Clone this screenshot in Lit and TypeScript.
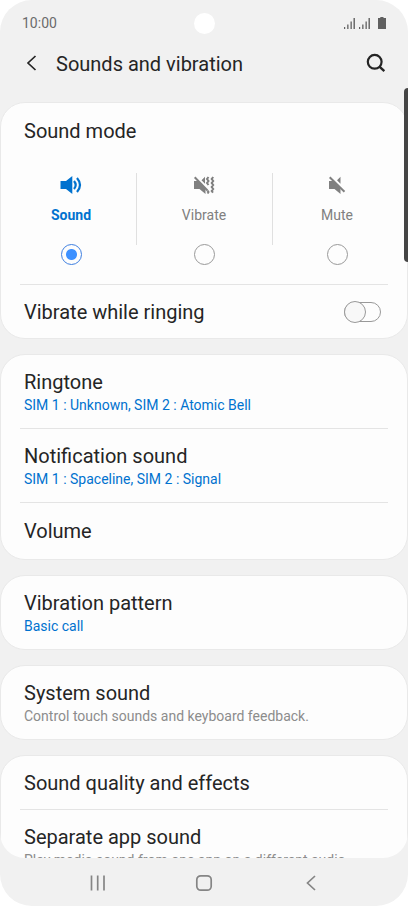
import { LitElement, html, css, nothing } from "lit";
import { customElement, property, state } from "lit/decorators.js";
import { classMap } from "lit/directives/class-map.js";

type Mode = "sound" | "vibrate" | "mute";

const modeIcons = {
  sound: html`<svg width="22" height="18" viewBox="0 0 22 18" fill="currentColor" aria-hidden="true">
    <path d="M0.500 5h5.500L12.300 0v18L6 13H0.500z" />
    <path d="M14 5q3.400 4 0 8M17 2q6 7 0 14" fill="none" stroke="currentColor" stroke-width="2.200" />
  </svg>`,
  vibrate: html`<svg width="22" height="18" viewBox="0 0 22 18" fill="currentColor" aria-hidden="true">
    <path d="M1 5h4l7.500 7.500V18L6.500 13H1zM12 0.800v7L8.500 4.300z" />
    <path d="M1.700 1.200 14.500 14.500" fill="none" stroke="currentColor" stroke-width="2" />
    <path d="M15.500 1l-1.500 2 1.500 2-1.500 2 1.500 2M20.200 1l-1.500 2 1.500 2-1.500 2 1.500 2-1.500 2 1.500 2-1.500 2 1.300 1.700M14.500 14.500l1 1.500-1 1.500" fill="none" stroke="currentColor" stroke-width="2" />
  </svg>`,
  mute: html`<svg width="18" height="18" viewBox="0 0 18 18" fill="currentColor" aria-hidden="true">
    <path d="M1 5h4l7.500 7.500V18L6.500 13H1zM12.500 0.800v7L9 4.300z" />
    <path d="M1.700 1.200 16.500 15.800" fill="none" stroke="currentColor" stroke-width="2" />
  </svg>`,
};

@customElement("setting-row")
class SettingRow extends LitElement {
  @property() heading = "";
  @property() detail = "";
  @property({ type: Boolean }) muted = false;
  @property({ type: Boolean }) roomy = false;

  static styles = css`
    :host {
      display: block;
    }
    .row {
      display: flex;
      flex-direction: column;
      justify-content: center;
      gap: 2px;
      width: 100%;
      padding: 15px 23px 14px;
      border: 0;
      background: none;
      color: #252525;
      font: 400 20px/24px Roboto, sans-serif;
      text-align: left;
    }
    .row.roomy {
      padding: 16px 23px;
    }
    .detail {
      color: #0072cf;
      font-size: 14px;
      line-height: 18px;
    }
    .detail.muted {
      color: #8c8c8c;
    }
  `;

  render() {
    return html`<button class=${classMap({ row: true, roomy: this.roomy })} type="button">
      <span>${this.heading}</span>
      ${this.detail
        ? html`<span class=${classMap({ detail: true, muted: this.muted })}>${this.detail}</span>`
        : nothing}
    </button>`;
  }
}

@customElement("app-root")
class AppRoot extends LitElement {
  @state() private mode: Mode = "sound";

  static styles = css`
    * {
      box-sizing: border-box;
    }
    :host {
      display: block;
      background: #fff;
      color: #252525;
      font: 400 20px/24px Roboto, sans-serif;
    }
    .screen {
      display: flex;
      flex-direction: column;
      height: 100vh;
      overflow: hidden;
      position: relative;
      border-radius: 32px;
      background: #f1f1f1;
    }
    .status {
      display: grid;
      grid-template-columns: 1fr auto 1fr;
      align-items: center;
      height: 46px;
      padding: 0 22px;
      color: #6b6b6b;
      font-size: 14px;
      line-height: 18px;
    }
    .camera {
      width: 21px;
      height: 21px;
      border-radius: 50%;
      background: #fff;
    }
    .signals {
      justify-self: end;
    }
    .bar {
      display: flex;
      align-items: center;
      height: 36px;
      padding: 0 20px;
    }
    .bar h1 {
      flex: 1;
      margin: 0;
      font-size: 20px;
      font-weight: 400;
    }
    .icon-button {
      display: flex;
      align-items: center;
      justify-content: center;
      width: 24px;
      height: 24px;
      padding: 0;
      border: 0;
      background: none;
      color: inherit;
    }
    .back {
      margin-right: 12px;
    }
    .content {
      display: flex;
      flex: 1;
      flex-direction: column;
      gap: 15px;
      min-height: 0;
      margin-top: 20px;
      overflow: hidden;
      border-radius: 0 0 25px 25px;
    }
    .card {
      flex: none;
      border: 1px solid #e9e9e9;
      border-radius: 25px;
      background: #fdfdfd;
    }
    .divider {
      height: 1px;
      margin: 0 19px;
      border: 0;
      background: #e4e4e4;
    }
    .card h2 {
      margin: 0;
      padding: 16px 23px 0;
      font-size: 20px;
      font-weight: 400;
    }
    .modes {
      display: grid;
      grid-template-columns: 65fr 68fr 65fr;
      margin: 0;
      padding: 30px 5px 19px;
      border: 0;
    }
    .mode {
      display: flex;
      flex-direction: column;
      align-items: center;
      position: relative;
      padding-top: 3px;
      color: #808080;
      font-size: 14px;
      line-height: 18px;
    }
    .mode + .mode::before {
      content: "";
      position: absolute;
      top: 0;
      left: 0;
      width: 1px;
      height: 72px;
      background: #e0e0e0;
    }
    .mode span {
      margin: 12px 0 20px;
    }
    .mode.active {
      color: #0072cf;
      font-weight: 700;
    }
    .mode input {
      appearance: none;
      width: 21px;
      height: 21px;
      margin: 0;
      border: 1px solid #999;
      border-radius: 50%;
    }
    .mode input:checked {
      border-color: #3e7fe0;
      background: radial-gradient(circle, #3e91ff 5px, transparent 6px);
    }
    .toggle-row {
      display: flex;
      align-items: center;
      justify-content: space-between;
      height: 53px;
      padding: 0 26px 0 23px;
    }
    .toggle {
      appearance: none;
      display: flex;
      align-items: center;
      width: 37px;
      height: 20px;
      margin: 0;
      border: 1px solid #999;
      border-radius: 10px;
    }
    .toggle::before {
      content: "";
      flex: none;
      width: 22px;
      height: 22px;
      margin-left: -1px;
      box-sizing: border-box;
      border: 1px solid #999;
      border-radius: 50%;
      background: #f8f8f8;
    }
    .toggle:checked {
      justify-content: flex-end;
      background: #3e91ff;
    }
    .edge {
      position: absolute;
      top: 88px;
      right: 0;
      width: 4px;
      height: 174px;
      border-radius: 4px 0 0 4px;
      background: #454545;
    }
    .nav {
      display: grid;
      grid-template-columns: repeat(3, 1fr);
      justify-items: center;
      align-items: center;
      flex: none;
      height: 48px;
      padding: 2px 44px 0;
      color: #858585;
    }
  `;

  private renderMode(id: Mode, label: string) {
    const active = this.mode === id;
    return html`<label class=${classMap({ mode: true, active })}>
      ${modeIcons[id]}
      <span>${label}</span>
      <input type="radio" name="mode" .checked=${active} @change=${() => (this.mode = id)} />
    </label>`;
  }

  render() {
    return html`<div class="screen">
      <div class="status">
        <span>10:00</span>
        <span class="camera"></span>
        <svg class="signals" width="43" height="14" viewBox="-2 0 43 14" fill="#606060" aria-hidden="true">
          <path d="M-1 11h1.200v2H-1zM2.200 8.500h1.300V13H2.200zM5.500 5.500h1.300V13H5.500zM8.500 2h1.400v11H8.500z" />
          <path d="M14 11h1.200v2H14zM17.200 8.500h1.300V13h-1.300zM20.500 5.500h1.300V13h-1.300zM23.500 2h1.400v11h-1.400z" />
          <path d="M35.300 1h3.200v1H41v11h-8V2h2.300z" />
        </svg>
      </div>
      <header class="bar">
        <button class="icon-button back" type="button" aria-label="Back">
          <svg width="24" height="24" viewBox="0 0 24 24" fill="none" stroke="currentColor" stroke-width="1.700">
            <path d="M15.500 4 8 11l7.500 7" />
          </svg>
        </button>
        <h1>Sounds and vibration</h1>
        <button class="icon-button" type="button" aria-label="Search">
          <svg width="24" height="24" viewBox="0 0 24 24" fill="none" stroke="currentColor" stroke-width="2.200">
            <circle cx="10.700" cy="9.800" r="6.900" />
            <path d="m15.500 14.700 4.800 4.500" stroke-width="2.400" />
          </svg>
        </button>
      </header>
      <main class="content">
        <section class="card">
          <h2>Sound mode</h2>
          <fieldset class="modes" aria-label="Sound mode">
            ${this.renderMode("sound", "Sound")} ${this.renderMode("vibrate", "Vibrate")}
            ${this.renderMode("mute", "Mute")}
          </fieldset>
          <hr class="divider" />
          <label class="toggle-row">
            Vibrate while ringing
            <input class="toggle" type="checkbox" role="switch" />
          </label>
        </section>
        <section class="card">
          <setting-row heading="Ringtone" detail="SIM 1 : Unknown, SIM 2 : Atomic Bell"></setting-row>
          <hr class="divider" />
          <setting-row heading="Notification sound" detail="SIM 1 : Spaceline, SIM 2 : Signal"></setting-row>
          <hr class="divider" />
          <setting-row heading="Volume" roomy></setting-row>
        </section>
        <section class="card">
          <setting-row heading="Vibration pattern" detail="Basic call"></setting-row>
        </section>
        <section class="card">
          <setting-row heading="System sound" detail="Control touch sounds and keyboard feedback." muted></setting-row>
        </section>
        <section class="card">
          <setting-row heading="Sound quality and effects"></setting-row>
          <hr class="divider" />
          <setting-row
            heading="Separate app sound"
            detail="Play media sound from one app on a different audio device."
            muted
          ></setting-row>
        </section>
      </main>
      <nav class="nav" aria-label="System">
        <button class="icon-button" type="button" aria-label="Recent apps">
          <svg width="24" height="24" viewBox="0 0 24 24" fill="none" stroke="currentColor" stroke-width="1.700">
            <path d="M6.500 4.500v15M12.700 4.500v15M19 4.500v15" />
          </svg>
        </button>
        <button class="icon-button" type="button" aria-label="Home">
          <svg width="24" height="24" viewBox="0 0 24 24" fill="none" stroke="currentColor" stroke-width="1.700">
            <rect x="4.800" y="4.800" width="14.400" height="14.400" rx="4" />
          </svg>
        </button>
        <button class="icon-button" type="button" aria-label="Back">
          <svg width="24" height="24" viewBox="0 0 24 24" fill="none" stroke="currentColor" stroke-width="1.700">
            <path d="m16 5-7.500 7 7.500 7" />
          </svg>
        </button>
      </nav>
      <div class="edge"></div>
    </div>`;
  }
}
